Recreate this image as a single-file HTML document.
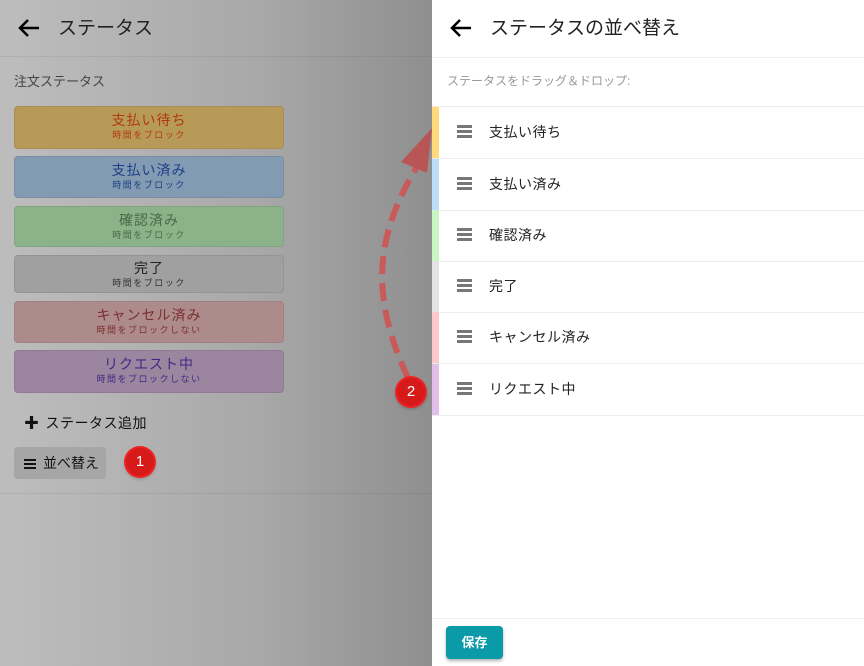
<!DOCTYPE html><html><head><meta charset="utf-8"><style>
*{margin:0;padding:0;box-sizing:border-box}
body{width:864px;height:666px;overflow:hidden;position:relative;font-family:"Liberation Sans","Noto Sans CJK JP",sans-serif;background:#fff}
#left{position:absolute;left:0;top:0;width:432px;height:666px;background:linear-gradient(90deg,#bdbdbd,#a8a8a8 60%,#8f8f8f)}
.hdr{position:absolute;top:0;left:0;width:432px;height:57px;border-bottom:1px solid rgba(0,0,0,.06)}
.card{position:absolute;left:14px;width:270px;border-radius:4px;text-align:center;border:1px solid rgba(0,0,0,.08)}
.card .t{font-size:14px;line-height:18px;margin-top:4px;letter-spacing:1px}
.card .s{font-size:9px;letter-spacing:1.5px;line-height:12px}
#right{position:absolute;left:432px;top:0;width:432px;height:666px;background:#fff}
.row{position:absolute;left:0;width:432px;height:52px;border-bottom:1px solid #ececec}
.row .c{position:absolute;left:0;top:0;width:7px;height:51px}
.row .ic{position:absolute;left:25px;top:18px;width:15px}
.row .ic i{display:block;height:3px;background:#777;margin-bottom:2px}
.row .l{position:absolute;left:57px;top:15px;font-size:14px;color:#222;letter-spacing:.5px}
.badge{position:absolute;width:28px;height:28px;border-radius:50%;background:#d61a1a;color:#fff;font-size:15px;text-align:center;line-height:28px;box-shadow:0 0 0 2px #e22,0 2px 4px rgba(0,0,0,.4)}
</style></head><body>
<div id="left">
<div class="hdr">
<svg style="position:absolute;left:17px;top:17px" width="24" height="22" viewBox="0 0 24 22"><path d="M22 11H3M11 3L3 11l8 8" stroke="#000" stroke-width="2.5" fill="none"/></svg>
<div style="position:absolute;left:58px;top:13px;font-size:19px;color:#222">ステータス</div>
</div>
<div style="position:absolute;left:14px;top:71px;font-size:13px;color:#444">注文ステータス</div>
<div class="card" style="top:106px;height:43px;background:#b89a58"><div class="t" style="color:#b03a10">支払い待ち</div><div class="s" style="color:#b03a10">時間をブロック</div></div>
<div class="card" style="top:156px;height:42px;background:#839bb2"><div class="t" style="color:#1d3f86">支払い済み</div><div class="s" style="color:#1d3f86">時間をブロック</div></div>
<div class="card" style="top:206px;height:41px;background:#8bb289"><div class="t" style="color:#4a6a46">確認済み</div><div class="s" style="color:#4a6a46">時間をブロック</div></div>
<div class="card" style="top:255px;height:38px;background:#a0a0a0"><div class="t" style="color:#222;margin-top:3px">完了</div><div class="s" style="color:#333">時間をブロック</div></div>
<div class="card" style="top:301px;height:42px;background:#ae8b8b"><div class="t" style="color:#7a2f2f">キャンセル済み</div><div class="s" style="color:#7a2f2f">時間をブロックしない</div></div>
<div class="card" style="top:350px;height:43px;background:#9b859f"><div class="t" style="color:#3f2a85">リクエスト中</div><div class="s" style="color:#3f2a85">時間をブロックしない</div></div>
<div style="position:absolute;left:24px;top:412px;font-size:14px;color:#111;letter-spacing:.5px"><b style="font-size:15px;margin-right:6px">✚</b>ステータス追加</div>
<div style="position:absolute;left:14px;top:447px;width:92px;height:32px;background:#a6a6a6;border-radius:4px;font-size:14px;color:#111;line-height:32px;padding-left:10px"><svg width="12" height="10" style="margin-right:7px;vertical-align:-1px"><rect y="0" width="12" height="2" fill="#111"/><rect y="4" width="12" height="2" fill="#111"/><rect y="8" width="12" height="2" fill="#111"/></svg>並べ替え</div>
<div style="position:absolute;left:0;top:493px;width:432px;border-top:1px solid rgba(0,0,0,.06)"></div>
</div>
<div id="right">
<div style="position:absolute;left:0;top:0;width:432px;height:58px;border-bottom:1px solid #eee">
<svg style="position:absolute;left:17px;top:17px" width="24" height="22" viewBox="0 0 24 22"><path d="M22 11H3M11 3L3 11l8 8" stroke="#000" stroke-width="2.5" fill="none"/></svg>
<div style="position:absolute;left:58px;top:13px;font-size:19px;color:#222">ステータスの並べ替え</div>
</div>
<div style="position:absolute;left:15px;top:72px;font-size:12px;color:#999">ステータスをドラッグ＆ドロップ:</div>
<div style="position:absolute;left:0;top:106px;width:432px;border-top:1px solid #ececec"></div>
<div class="row" style="top:107px"><div class="c" style="background:#ffd97a"></div><div class="ic"><i></i><i></i><i></i></div><div class="l">支払い待ち</div></div>
<div class="row" style="top:159px"><div class="c" style="background:#bcdcf8"></div><div class="ic"><i></i><i></i><i></i></div><div class="l">支払い済み</div></div>
<div class="row" style="top:210px"><div class="c" style="background:#c8f5c4"></div><div class="ic"><i></i><i></i><i></i></div><div class="l">確認済み</div></div>
<div class="row" style="top:261px"><div class="c" style="background:#e4e4e4"></div><div class="ic"><i></i><i></i><i></i></div><div class="l">完了</div></div>
<div class="row" style="top:312px"><div class="c" style="background:#fcc8c8"></div><div class="ic"><i></i><i></i><i></i></div><div class="l">キャンセル済み</div></div>
<div class="row" style="top:364px"><div class="c" style="background:#e0bfe8"></div><div class="ic"><i></i><i></i><i></i></div><div class="l">リクエスト中</div></div>
<div style="position:absolute;left:0;top:618px;width:432px;border-top:1px solid #eee"></div>
<div style="position:absolute;left:14px;top:626px;width:57px;height:33px;background:#0a9aa8;border-radius:4px;color:#fff;font-size:13px;font-weight:bold;text-align:center;line-height:33px;box-shadow:0 2px 3px rgba(0,0,0,.3)">保存</div>
</div>
<svg style="position:absolute;left:0;top:0" width="864" height="666"><path d="M408 378 C 372 300, 372 240, 418 165" stroke="#c85a5a" stroke-width="6" stroke-dasharray="18 9" fill="none"/><polygon points="432,128 401,162 427,173" fill="#b85555"/></svg>
<div class="badge" style="left:126px;top:448px">1</div>
<div class="badge" style="left:397px;top:378px">2</div>
</body></html>
